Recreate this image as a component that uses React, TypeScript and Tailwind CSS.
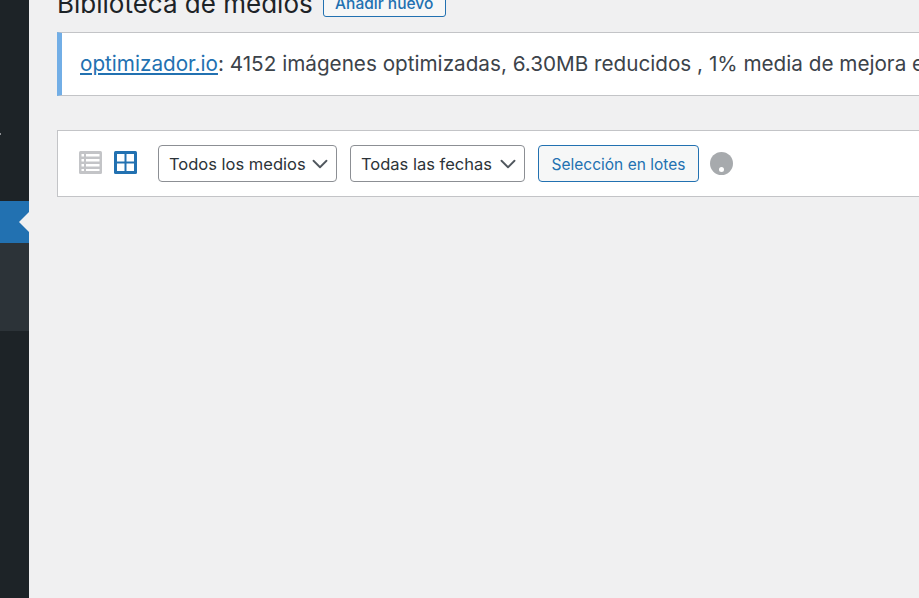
import { ChevronDown } from 'lucide-react';

function FilterSelect({ label, width }: { label: string; width: string }) {
  return (
    <div className={`flex h-[37px] items-center justify-between rounded border border-[#8c8f94] bg-white pl-[10px] pr-[3px] text-[16.5px] text-[#2c3338] ${width}`}>
      <span className="whitespace-nowrap pt-[2px]">{label}</span>
      <ChevronDown className="h-[26px] w-[26px] text-[#50575e]" strokeWidth={1.7} />
    </div>
  );
}

function ListIcon() {
  return (
    <svg width="23" height="23" viewBox="0 0 23 23" className="shrink-0">
      <rect width="23" height="23" rx="1.5" fill="#c3c4c7" />
      <g fill="#fff">
        <rect x="2.5" y="3" width="2.5" height="2.5" />
        <rect x="2.5" y="8" width="2.5" height="2.5" />
        <rect x="2.5" y="13" width="2.5" height="2.5" />
        <rect x="2.5" y="18" width="2.5" height="2" />
        <rect x="7" y="3" width="13.5" height="2.5" />
        <rect x="7" y="8" width="13.5" height="2.5" />
        <rect x="7" y="13" width="13.5" height="2.5" />
        <rect x="7" y="18" width="13.5" height="2" />
      </g>
    </svg>
  );
}

function GridIcon() {
  return (
    <svg width="23" height="23" viewBox="0 0 23 23" className="shrink-0">
      <rect width="23" height="23" rx="1.5" fill="#2271b1" />
      <g fill="#fff">
        <rect x="3" y="3" width="7.5" height="7.5" />
        <rect x="12.5" y="3" width="7.5" height="7.5" />
        <rect x="3" y="12.5" width="7.5" height="7.5" />
        <rect x="12.5" y="12.5" width="7.5" height="7.5" />
      </g>
    </svg>
  );
}

export default function App() {
  return (
    <div className="flex h-[598px] w-[919px] overflow-hidden bg-[#f0f0f1] font-['Inter',sans-serif]">
      <aside className="relative flex w-[29px] shrink-0 flex-col bg-[#1d2327]">
        <div className="absolute left-0 top-[133px] h-[2px] w-[1px] bg-[#8c8f94]" />
        <div className="h-[201px]" />
        <div className="relative h-[42px] bg-[#2271b1]">
          <div className="absolute right-0 top-[11px] h-0 w-0 border-y-[10px] border-r-[10px] border-y-transparent border-r-[#f0f0f1]" />
        </div>
        <div className="h-[88px] bg-[#2c3338]" />
      </aside>

      <main className="min-w-0 flex-1 pl-[28px]">
        <div className="-mt-[12px] flex h-[29px] items-center">
          <h1 className="whitespace-nowrap pt-[2px] text-[26px] font-normal text-[#1d2327]">Biblioteca de medios</h1>
          <span className="ml-[10px] flex h-[29px] w-[123px] items-center justify-center rounded-[3px] border border-[#2271b1] bg-[#f6f7f7] pt-[3px] text-[15.5px] font-medium text-[#2271b1]">
            Añadir nuevo
          </span>
        </div>

        <div className="mt-[15px] flex h-[64px] w-[1000px] items-center border border-l-[5px] border-[#c3c4c7] border-l-[#72aee6] bg-white pl-[18px] text-[20.7px] text-[#3c434a]">
          <p className="whitespace-nowrap">
            <a className="text-[#2271b1] underline">optimizador.io</a>: 4152 imágenes optimizadas, 6.30MB reducidos , 1% media de mejora en total
          </p>
        </div>

        <div className="mt-[34px] flex h-[67px] w-[1000px] items-center border border-[#c3c4c7] bg-white pl-[21px]">
          <div className="mb-[2px]">
            <ListIcon />
          </div>
          <div className="mb-[2px] ml-[12px]">
            <GridIcon />
          </div>
          <div className="ml-[21px] flex items-center gap-[13px]">
            <FilterSelect label="Todos los medios" width="w-[179px]" />
            <FilterSelect label="Todas las fechas" width="w-[175px]" />
            <span className="flex h-[37px] w-[161px] items-center justify-center rounded border border-[#2271b1] bg-[#f6f7f7] pt-[2px] text-[15.5px] text-[#2271b1]">
              Selección en lotes
            </span>
          </div>
          <div className="relative ml-[11px] h-[23px] w-[23px] rounded-full bg-[#a7aaad]">
            <div className="absolute bottom-[3px] left-[9px] h-[5px] w-[5px] rounded-full bg-white" />
          </div>
        </div>
      </main>
    </div>
  );
}
